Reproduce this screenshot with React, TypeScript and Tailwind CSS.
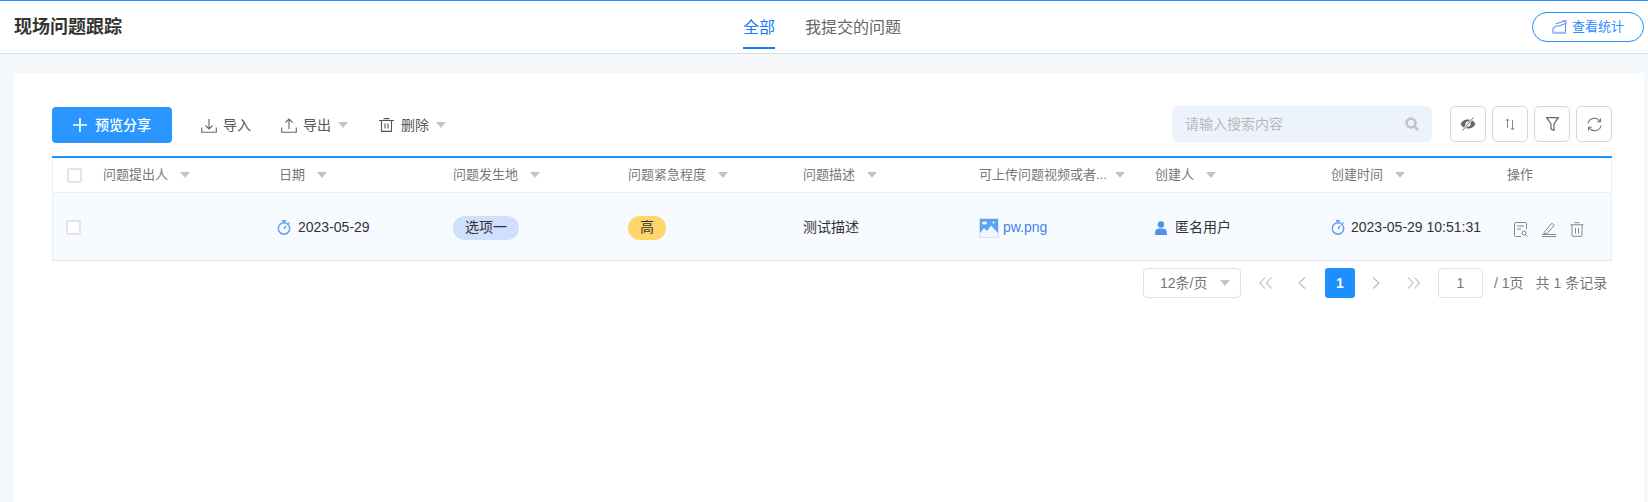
import React from "react";

const font = { fontFamily: '"Liberation Sans", "Noto Sans CJK SC", sans-serif' };

const Caret = ({ className = "" }: { className?: string }) => (
  <span className={`inline-block w-0 h-0 border-x-[5px] border-x-transparent border-t-[6px] border-t-[#c4c4c4] ${className}`} />
);

const Clock = () => (
  <svg width="14" height="15" viewBox="0 0 14 15" fill="none" stroke="#5b9bf0" strokeWidth="1.4" className="shrink-0">
    <circle cx="7" cy="8.500" r="5.700" />
    <path d="M5 .8h4M7 1v2M7 8.900l2-3M11.300 2.400l1.200 1.200" />
  </svg>
);

const Checkbox = () => (
  <span className="block w-[15px] h-[15px] rounded-[2px] border-2 border-[#e1e4ea] bg-white" />
);

const ToolBtn = ({ children }: { children: React.ReactNode }) => (
  <button className="w-[36px] h-[36px] rounded-[5px] border border-[#d6d6d6] bg-white flex items-center justify-center">
    {children}
  </button>
);

const headers: [string, string, boolean][] = [
  ["问题提出人", "w-[176px]", true],
  ["日期", "w-[174px]", true],
  ["问题发生地", "w-[175px]", true],
  ["问题紧急程度", "w-[175px]", true],
  ["问题描述", "w-[176px]", true],
  ["可上传问题视频或者...", "w-[176px]", true],
  ["创建人", "w-[176px]", true],
  ["创建时间", "w-[176px]", true],
  ["操作", "flex-1", false],
];

export default function App() {
  return (
    <div style={font} className="w-[1648px] h-[502px] overflow-hidden bg-[#f5f8fb] flex flex-col text-[14px]">
      <header className="h-[54px] shrink-0 bg-white border-t border-t-[#1e8fff] border-b border-b-[#d9dce0] flex items-center relative">
        <h1 className="pl-[14px] text-[18px] font-bold text-[#333] leading-[24px] -mt-[1px] w-[743px]">现场问题跟踪</h1>
        <nav className="flex self-stretch text-[16px]">
          <a className="w-[32px] mr-[30px] pt-[16px] text-[#1677ff] border-b-[2px] border-b-[#1677ff] h-[48px] whitespace-nowrap leading-[22px]">全部</a>
          <a className="pt-[16px] text-[#666] whitespace-nowrap leading-[22px]">我提交的问题</a>
        </nav>
        <button className="absolute left-[1532px] top-[11px] w-[112px] h-[30px] rounded-full border border-[#1e8fff] flex items-center pl-[19px] text-[#2f8cff] text-[13px]">
          <svg width="15" height="14" viewBox="0 0 15 14" fill="none" stroke="#5b8def" strokeWidth="1.100" className="mr-[5px]">
            <path d="M1 13V8.500L4 6h3L13.500 3.500V13z" />
            <path d="M1 12.600h13" strokeWidth="1.800" stroke="#9db8f5" />
            <path d="M4 3.800L13 1M10.500.7H14v3" />
          </svg>
          查看统计
        </button>
      </header>

      <main className="flex-1 ml-[14px] mr-[4px] mt-[19px] bg-white pl-[38px] pr-[32px] pt-[33px]">
        <div className="h-[36px] mb-[14px] flex items-start text-[14px] text-[#555]">
          <button className="w-[120px] h-[36px] mt-[1px] rounded-[4px] bg-[#2997ff] text-white flex items-center pl-[21px] font-medium">
            <svg width="14" height="14" viewBox="0 0 14 14" stroke="white" strokeWidth="1.600" className="mr-[8px]"><path d="M7 0v14M0 7h14" /></svg>
            预览分享
          </button>
          <div className="ml-[29px] h-[36px] mt-[1px] flex items-center w-[80px]">
            <svg width="16" height="15" viewBox="0 0 16 15" fill="none" stroke="#666" strokeWidth="1.100" className="mr-[6px]">
              <path d="M8 1v9.500M4.500 7.500L8 11l3.500-3.500M.7 9.500v4.800h14.600V9.500" />
            </svg>
            导入
          </div>
          <div className="h-[36px] mt-[1px] flex items-center w-[98px]">
            <svg width="16" height="15" viewBox="0 0 16 15" fill="none" stroke="#666" strokeWidth="1.100" className="mr-[6px]">
              <path d="M8 11V1.200M4.500 4.500L8 1l3.500 3.500M.7 9.500v4.800h14.600V9.500" />
            </svg>
            导出<Caret className="ml-[7px]" />
          </div>
          <div className="h-[36px] mt-[1px] flex items-center">
            <svg width="15" height="14" viewBox="0 0 15 14" fill="none" stroke="#555" strokeWidth="1.100" className="mr-[7px]">
              <path d="M0 2.500h15M4.500.6h6M2.500 2.500v10.900h10V2.500M6 5.500v5M9 5.500v5" />
            </svg>
            删除<Caret className="ml-[7px]" />
          </div>
          <div className="ml-auto w-[260px] h-[36px] rounded-[6px] bg-[#ecf3fc] flex items-center justify-between pl-[13px] pr-[13px] text-[#b9b9b9] mr-[18px]">
            请输入搜索内容
            <svg width="14" height="14" viewBox="0 0 14 14" fill="none" stroke="#c4c4c4" strokeWidth="2.600">
              <circle cx="6" cy="6" r="4.500" />
              <path d="M9.500 9.500L13 13" />
            </svg>
          </div>
          <div className="flex gap-[6px]">
            <ToolBtn>
              <svg width="16" height="14" viewBox="0 0 16 14" fill="none">
                <path d="M.5 7C3 3 5.500 2.500 8 2.500S13 3 15.500 7C13 11 10.500 11.500 8 11.500S3 11 .5 7z" fill="#666" />
                <circle cx="8" cy="7" r="2.600" fill="#fff" />
                <circle cx="8" cy="7" r="1.300" fill="#666" />
                <path d="M13.500 .3L2.500 13.700" stroke="#fff" strokeWidth="2.200" />
                <path d="M13.500 .3L2.500 13.700" stroke="#777" strokeWidth="1" />
              </svg>
            </ToolBtn>
            <ToolBtn>
              <svg width="10" height="12" viewBox="0 0 10 12" fill="none" stroke="#888" strokeWidth="1">
                <path d="M2.500 10V1M1 2.800L2.500 1 4 2.800M7.500 2v10M6 10.200L7.500 12 9 10.200" />
              </svg>
            </ToolBtn>
            <ToolBtn>
              <svg width="13" height="14" viewBox="0 0 13 14" fill="none" stroke="#666" strokeWidth="1.200">
                <path d="M.7.7h11.600L8 7v6.300L5 12V7z" />
              </svg>
            </ToolBtn>
            <ToolBtn>
              <svg width="15" height="15" viewBox="0 0 15 15" fill="none" stroke="#777" strokeWidth="1.100">
                <path d="M1 6.500A6.500 6.500 0 0 1 13 4.500M14 8.500A6.500 6.500 0 0 1 2 10.500" />
                <path d="M13.500 1.500v3.300h-3.300M1.500 13.500v-3.300h3.300" />
              </svg>
            </ToolBtn>
          </div>
        </div>

        <section className="border-t-2 border-t-[#1e8fff] w-[1560px]">
          <div className="h-[35px] flex items-center border-x border-x-[#e8edf5] border-b border-b-[#e8edf5] text-[#777] text-[13px]">
            <div className="w-[50px] pl-[14px] shrink-0"><Checkbox /></div>
            {headers.map(([label, w, caret]) => (
              <div key={label} className={`${w} shrink-0 flex items-center`}>
                <span className="whitespace-nowrap">{label}</span>
                {caret && <Caret className={label.startsWith("可上传") ? "ml-[8px]" : "ml-[12px]"} />}
              </div>
            ))}
          </div>
          <div className="h-[68px] pt-[2px] flex items-center bg-[#f7faff] border-x border-x-[#e8edf5] border-b border-b-[#e4e8ee] text-[14px] text-[#333]">
            <div className="w-[50px] pl-[13px] shrink-0"><Checkbox /></div>
            <div className="w-[176px] shrink-0" />
            <div className="w-[174px] shrink-0 flex items-center -ml-[2px] mr-[2px] gap-[7px]"><Clock /><span>2023-05-29</span></div>
            <div className="w-[175px] shrink-0">
              <span className="inline-flex items-center justify-center w-[66px] h-[24px] rounded-full bg-[#cfe0fe]">选项一</span>
            </div>
            <div className="w-[175px] shrink-0">
              <span className="inline-flex items-center justify-center w-[38px] h-[24px] rounded-full bg-[#ffd469]">高</span>
            </div>
            <div className="w-[176px] shrink-0">测试描述</div>
            <div className="w-[176px] shrink-0 flex items-center gap-[4px] text-[#3f83ee]">
              <svg width="20" height="20" viewBox="0 0 20 20" className="shrink-0">
                <rect width="20" height="20" fill="#cfe3fb" />
                <rect x="1" y="1" width="18" height="18" fill="#5ba3f2" />
                <path d="M1 19v-4l4-5 3 3 4-5.500L19 15v4z" fill="#f2f7fe" />
                <ellipse cx="5.500" cy="5" rx="2.500" ry="1.500" fill="#fff" />
                <circle cx="14.500" cy="4.500" r="1" fill="#fff" />
              </svg>
              pw.png
            </div>
            <div className="w-[176px] shrink-0 flex items-center gap-[8px]">
              <svg width="12" height="14" viewBox="0 0 12 14" fill="#4a94ec" className="shrink-0">
                <circle cx="6" cy="3.500" r="3.200" />
                <path d="M0 14c0-6 1.500-6.500 6-6.500S12 8 12 14z" />
              </svg>
              匿名用户
            </div>
            <div className="w-[176px] shrink-0 flex items-center gap-[6px] whitespace-nowrap"><Clock /><span>2023-05-29 10:51:31</span></div>
            <div className="flex-1 flex items-center gap-[14px] pl-[7px] pt-[3px]">
              <svg width="14" height="15" viewBox="0 0 14 15" fill="none" stroke="#888" strokeWidth="1">
                <path d="M12.500 7V1.500a1 1 0 0 0-1-1h-10a1 1 0 0 0-1 1v12a1 1 0 0 0 1 1H7M3 4h7M3 7h4" />
                <circle cx="10" cy="11" r="2" />
                <path d="M11.500 12.500l2 2" />
              </svg>
              <svg width="14" height="15" viewBox="0 0 14 15" fill="none" stroke="#888" strokeWidth="1">
                <path d="M2 10.500L9.800 1.200l2.500 2-7.200 8.300H2.200zM0 12.500h14M0 14.500h14" />
              </svg>
              <svg width="14" height="15" viewBox="0 0 14 15" fill="none" stroke="#888" strokeWidth="1">
                <path d="M.5 2.800h13M4.500.7h5M2 2.800v10.500a1 1 0 0 0 1 1h8a1 1 0 0 0 1-1V2.800M5.500 6v5.500M8.500 6v5.500" />
              </svg>
            </div>
          </div>
        </section>

        <div className="w-[1560px] mt-[7px] flex items-center h-[30px] text-[14px] text-[#777]">
          <div className="ml-[1091px] w-[98px] h-[30px] rounded-[4px] border border-[#dde0e6] flex items-center pl-[16px] shrink-0 whitespace-nowrap">
            12条/页<Caret className="ml-[13px]" />
          </div>
          <svg width="14" height="12" viewBox="0 0 14 12" fill="none" stroke="#bbb" strokeWidth="1.100" className="ml-[18px] shrink-0"><path d="M6 .5L1 6l5 5.500M12.500.5L7.500 6l5 5.500" /></svg>
          <svg width="8" height="12" viewBox="0 0 8 12" fill="none" stroke="#bbb" strokeWidth="1.100" className="ml-[25px] shrink-0"><path d="M7 .5L1 6l6 5.500" /></svg>
          <span className="ml-[19px] w-[30px] h-[30px] rounded-[3px] bg-[#1e8fff] text-white font-bold flex items-center justify-center shrink-0">1</span>
          <svg width="8" height="12" viewBox="0 0 8 12" fill="none" stroke="#bbb" strokeWidth="1.100" className="ml-[17px] shrink-0"><path d="M1 .5L7 6l-6 5.500" /></svg>
          <svg width="14" height="12" viewBox="0 0 14 12" fill="none" stroke="#bbb" strokeWidth="1.100" className="ml-[27px] shrink-0"><path d="M1 .5L6 6l-5 5.500M7.500.5l5 5.500-5 5.500" /></svg>
          <span className="ml-[17px] w-[45px] h-[30px] rounded-[4px] border border-[#dde0e6] flex items-center justify-center shrink-0">1</span>
          <span className="ml-[11px] whitespace-nowrap">/ 1页</span>
          <span className="ml-[12px] whitespace-nowrap">共 1 条记录</span>
        </div>
      </main>
    </div>
  );
}
